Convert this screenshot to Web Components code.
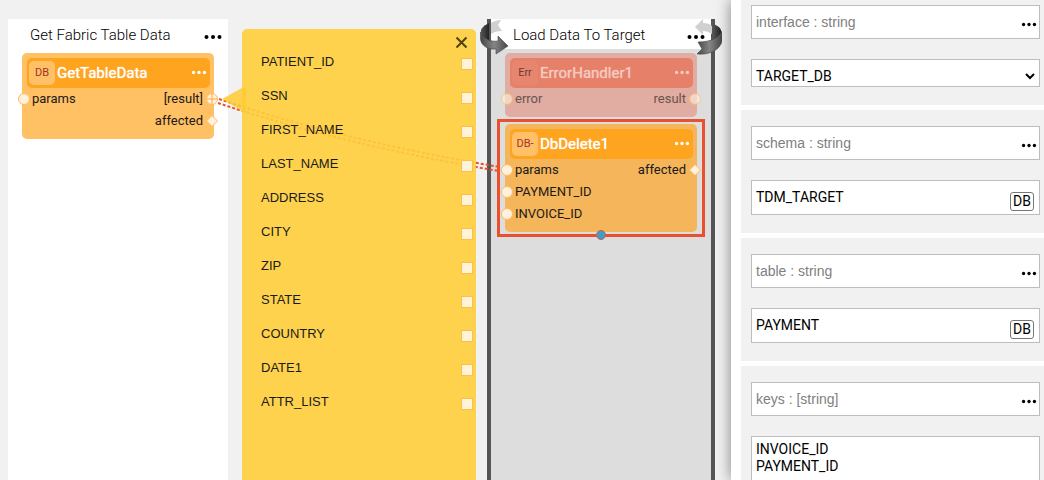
<!DOCTYPE html>
<html lang="en">
<head>
<meta charset="utf-8">
<title>Flow editor</title>
<style>
body { margin: 0; font-family: Roboto, "Liberation Sans", sans-serif; font-size: 13px; color: #1a1a1a; }
</style>
</head>
<body>
<flow-app></flow-app>
<script>
const define = (name, html) => customElements.define(name, class extends HTMLElement {
  constructor() {
    super();
    this.attachShadow({ mode: 'open' });
  }
  connectedCallback() {
    const t = document.createElement('template');
    t.innerHTML = typeof html === 'function' ? html(this) : html;
    this.shadowRoot.replaceChildren(t.content.cloneNode(true));
  }
});
const attr = (el, name) => el.getAttribute(name) || '';

define('more-button', el => {
  const small = el.hasAttribute('small');
  return `
<style>
  :host { display: block; color: #000; position: relative; z-index: 1; }
  button { display: block; border: 0; padding: 0; background: none; color: inherit; cursor: pointer; }
  svg { display: block; }
</style>
<button type="button" aria-label="More"><svg width="${small ? 16 : 18}" height="${small ? 5 : 6}" viewBox="0 0 18 6" fill="currentColor"><circle cx="2.500" cy="3" r="2"/><circle cx="9" cy="3" r="2"/><circle cx="15.500" cy="3" r="2"/></svg></button>`;
});

/* A node port: circle, diamond, or array (circle with a cross). */
define('flow-port', el => {
  const shapes = {
    circle: '<circle cx="6" cy="6" r="5.500"/>',
    diamond: '<path d="M6 .5 11.500 6 6 11.500 .5 6z"/>',
    array: '<circle cx="6" cy="6" r="5.500"/><path d="M6 1v10M1 6h10" stroke="#ffa93a"/>'
  };
  return `
<style>:host { display: block; } svg { display: block; overflow: visible; }</style>
<svg width="12" height="12" viewBox="0 0 12 12" fill="#fff1dd" stroke="#ffbb58">${shapes[attr(el, 'shape') || 'circle']}</svg>`;
});

define('port-row', el => `
<style>
  :host { display: flex; justify-content: space-between; height: 22px; line-height: 22px; padding: 0 11px 0 10px; position: relative; }
  flow-port { position: absolute; top: 5px; }
  .in { left: -4px; }
  .out { right: -4px; }
  :host([dim]) flow-port { opacity: .6; }
</style>
<span>${attr(el, 'in')}</span><span>${attr(el, 'out')}</span>
${attr(el, 'in') ? '<flow-port class="in"></flow-port>' : ''}
${attr(el, 'out') ? `<flow-port class="out" shape="${attr(el, 'shape')}"></flow-port>` : ''}`);

define('flow-node', el => `
<style>
  :host { display: block; position: relative; box-sizing: border-box; padding: 5px 0 7px; border-radius: 5px;
    background: #ffc164; --head: #ffa41f; --badge: #ffc068; --badge-text: #a5332b; --title: #fff; }
  :host([kind="error"]) { background: #e1aca1; color: #6b5350; --head: #e68069; --badge: #e7866f; --badge-text: #6f3a34; --title: #f5c9bf; }
  :host([selected]) { background: #f5b55a; }
  header { display: flex; align-items: center; height: 30px; margin: 0 4px 0 5px; padding: 0 3px 0 2px; border-radius: 5px; background: var(--head); box-sizing: border-box; }
  .badge { flex: none; width: 26px; height: 24px; line-height: 23px; border-radius: 5px; background: var(--badge); color: var(--badge-text); font-size: 11px; text-align: center; }
  h3 { flex: 1; margin: 0 0 0 2px; font-size: 15px; font-weight: 400; line-height: 30px; color: var(--title); text-shadow: 0 0 1px var(--title); }
  more-button { color: var(--title); margin-bottom: 2px; }
  .frame { display: none; position: absolute; inset: -5px -8px; border: 3px solid #e8502f; pointer-events: none; }
  .handle { position: absolute; left: 50%; bottom: -6px; margin: 0 0 0 -5px; width: 8px; height: 8px; border-radius: 50%; background: #3f9dca; border: 1px solid #c8604c; }
  :host([selected]) .frame { display: block; }
</style>
<header><span class="badge">${attr(el, 'badge')}</span><h3>${attr(el, 'title-text')}</h3><more-button small></more-button></header>
<div class="frame"><div class="handle"></div></div>
<slot></slot>`);

/* The ribbon that circles a looping stage: its head on the left side, its tail on the right. */
define('loop-ribbon', el => `
<style>:host { display: block; width: 30px; height: 38px; } svg { display: block; }</style>
<svg width="30" height="38" viewBox="0 0 30 38">
  <defs>
    <linearGradient id="g" x1="0" x2="1"><stop offset="0" stop-color="#444"/><stop offset=".5" stop-color="#858585"/><stop offset="1" stop-color="#484848"/></linearGradient>
    <linearGradient id="b" x1="0" x2="1"><stop offset="0" stop-color="#555"/><stop offset="1" stop-color="#222"/></linearGradient>
  </defs>
  ${el.hasAttribute('tail') ? `
  <path d="M3 8 11 0V4C15 4 18 5 20 7V15C17 13 14 12 11 12V16Z" fill="#d0d0d0"/>
  <path d="M21 5C27 7 30 10 29 14C28 17 25 19 21 21Z" fill="url(#b)"/>
  <path d="M6 23C20 23 28 18 30 12V22C28 31 18 36 5 35L10 30Z" fill="url(#g)" stroke="#444" stroke-width=".6"/>` : `
  <path d="M11 4C14 2 18 1 21 1L18 6 22 12C17 12 14 13 11 15Z" fill="#d0d0d0"/>
  <path d="M9 4C3 7 0 10 1 14C2 18 5 20 9 21Z" fill="url(#b)"/>
  <path d="M.5 13C3 20 10 23 18 22V17L28 27 16 35V30C7 31 1 26 .5 20Z" fill="url(#g)" stroke="#444" stroke-width=".6"/>`}
</svg>`);

define('flow-stage', el => `
<style>
  :host { display: flex; flex-direction: column; flex: none; width: 220px; background: #fff; position: relative; }
  :host([loop]) { background: #ddd; border: solid #555; border-width: 0 4px; }
  header { display: flex; justify-content: space-between; align-items: center; height: 30px; padding: 0 6px 0 22px; background: #fff; }
  h2 { margin: 0; font-size: 15px; font-weight: 300; line-height: 30px; color: #000; }
  header h2 { padding-top: 2px; }
  more-button { margin-top: 6px; }
  .body { display: flex; flex-direction: column; gap: 7px; padding: 4px 14px; }
  loop-ribbon { display: none; position: absolute; top: 0; }
  :host([loop]) loop-ribbon { display: block; }
  .l { left: -11px; }
  .r { right: -11px; }
</style>
<header><h2>${attr(el, 'title-text')}</h2><more-button></more-button></header>
<div class="body"><slot></slot></div>
<loop-ribbon class="l"></loop-ribbon><loop-ribbon class="r" tail></loop-ribbon>`);

define('field-row', el => `
<style>
  :host { display: block; font: 13px/34px "Liberation Sans", sans-serif; }
  label { display: flex; justify-content: space-between; align-items: center; height: 34px; padding: 0 3px 0 19px; }
  input { appearance: none; margin: 3px 0 0; width: 12px; height: 12px; border: 1px solid #ffbe46; background: #fff3da; box-sizing: border-box; }
</style>
<label><span>${attr(el, 'name')}</span><input type="checkbox"></label>`);

define('fields-panel', `
<style>
  :host { display: block; position: relative; z-index: 2; flex: none; width: 234px; margin: 10px 11px 0 14px; box-sizing: border-box;
    background: #ffcf3ce8; border-radius: 5px 5px 0 0; }
  .tip { position: absolute; left: -20px; top: 58px; }
  .bar { display: flex; justify-content: flex-end; height: 16px; padding-right: 8px; }
  button { border: 0; background: none; padding: 7px 0 0; height: 20px; cursor: pointer; }
  svg { display: block; }
</style>
<svg class="tip" width="24" height="26" viewBox="0 0 24 26"><path d="M0 12 20 1 24 0V26L20 24Z" fill="#ffcb30" fill-opacity=".85"/></svg>
<div class="bar"><button type="button" aria-label="Close"><svg width="13" height="13" viewBox="0 0 13 13" stroke="#4f430f" stroke-width="2"><path d="M1.500 1.500 11.500 11.500M11.500 1.500 1.500 11.500"/></svg></button></div>
<slot></slot>`);

define('flow-canvas', `
<style>
  :host { display: flex; position: relative; min-width: 0; padding: 19px 0 0 8px; background: #f1f1f1; overflow: hidden; }
  .links { position: absolute; left: 0; top: 0; z-index: 1; pointer-events: none; }
</style>
<slot></slot>
<svg class="links" width="520" height="200" fill="none" stroke="#e8502f" stroke-width="2" stroke-dasharray="3 2">
  <path d="M219 99Q340 140 500 167"/><path d="M218 103Q340 144 499 171"/>
</svg>`);

define('prop-card', el => `
<style>
  :host { display: flex; flex-direction: column; gap: 20px; padding: 16px 4px 18px 10px; background: #f1f1f1; }
  .name { display: flex; align-items: center; height: 34px; box-sizing: border-box; border: 1px solid #bdbdbd; background: #fff; }
  .name input { flex: 1; min-width: 0; border: 0; padding: 0 4px; background: none; outline: 0; font: 14px/20px "Liberation Sans", sans-serif; color: #808080; }
  more-button { margin: 4px 2px 0 0; }
</style>
<div class="name"><input value="${attr(el, 'name')}" aria-label="Parameter name" readonly><more-button small></more-button></div>
<slot></slot>`);

const fieldCss = `
  :host { display: flex; box-sizing: border-box; border: 1px solid #bdbdbd; background: #fff; }
  input, select, textarea { flex: 1; min-width: 0; box-sizing: border-box; margin: 0; border: 0; outline: 0; background: none; color: #000; font: 14px/17px Roboto, sans-serif; }`;

define('prop-select', el => `
<style>${fieldCss}
  :host { height: 28px; position: relative; }
  select { appearance: none; padding: 7px 20px 0 4px; }
  svg { position: absolute; right: 4px; top: 13px; pointer-events: none; }
</style>
<select aria-label="${attr(el, 'label')}"><option>${attr(el, 'value')}</option></select>
<svg width="10" height="7" viewBox="0 0 10 7" fill="none" stroke="#000" stroke-width="2"><path d="M1 1 5 5 9 1"/></svg>`);

define('prop-text', el => `
<style>${fieldCss}
  :host { height: 35px; align-items: flex-start; }
  input { height: 32px; padding: 0 4px; }
  button { flex: none; width: 24px; height: 19px; margin: 11px 5px 0 0; padding: 0; border: 1px solid #777; border-radius: 3px; background: #fff; color: #000; font: 14px/17px Roboto, sans-serif; }
</style>
<input value="${attr(el, 'value')}" aria-label="${attr(el, 'label')}"><button type="button">DB</button>`);

define('prop-area', el => `
<style>${fieldCss}
  textarea { display: block; height: 80px; padding: 4px; resize: none; }
</style>
<textarea aria-label="${attr(el, 'label')}">${attr(el, 'value')}</textarea>`);

define('prop-sidebar', `
<style>
  :host { display: flex; flex-direction: column; gap: 5px; position: relative; z-index: 3; padding-left: 10px; background: #fff;
    box-shadow: 0 0 14px #0007; min-height: 0; }
  ::slotted(*) { flex: none; }
  ::slotted(:first-child) { padding-top: 5px !important; }
</style>
<slot></slot>`);

define('flow-app', `
<style>
  :host { display: grid; grid-template-columns: minmax(0, 1fr) 313px; grid-template-rows: minmax(0, 1fr); height: 100vh; overflow: hidden; }
</style>
<flow-canvas>
  <flow-stage title-text="Get Fabric Table Data">
    <flow-node badge="DB" title-text="GetTableData">
      <port-row in="params" out="[result]" shape="array"></port-row>
      <port-row out="affected" shape="diamond"></port-row>
    </flow-node>
  </flow-stage>
  <fields-panel>
    ${['PATIENT_ID', 'SSN', 'FIRST_NAME', 'LAST_NAME', 'ADDRESS', 'CITY', 'ZIP', 'STATE', 'COUNTRY', 'DATE1', 'ATTR_LIST'].map(n => `<field-row name="${n}"></field-row>`).join('')}
  </fields-panel>
  <flow-stage title-text="Load Data To Target" loop>
    <flow-node kind="error" badge="Err" title-text="ErrorHandler1">
      <port-row dim in="error" out="result"></port-row>
    </flow-node>
    <flow-node selected badge="DB-" title-text="DbDelete1">
      <port-row in="params" out="affected" shape="diamond"></port-row>
      <port-row in="PAYMENT_ID"></port-row>
      <port-row in="INVOICE_ID"></port-row>
    </flow-node>
  </flow-stage>
</flow-canvas>
<prop-sidebar>
  <prop-card name="interface : string"><prop-select label="interface" value="TARGET_DB"></prop-select></prop-card>
  <prop-card name="schema : string"><prop-text label="schema" value="TDM_TARGET"></prop-text></prop-card>
  <prop-card name="table : string"><prop-text label="table" value="PAYMENT"></prop-text></prop-card>
  <prop-card name="keys : [string]"><prop-area label="keys" value="INVOICE_ID&#10;PAYMENT_ID"></prop-area></prop-card>
</prop-sidebar>`);
</script>
</body>
</html>
